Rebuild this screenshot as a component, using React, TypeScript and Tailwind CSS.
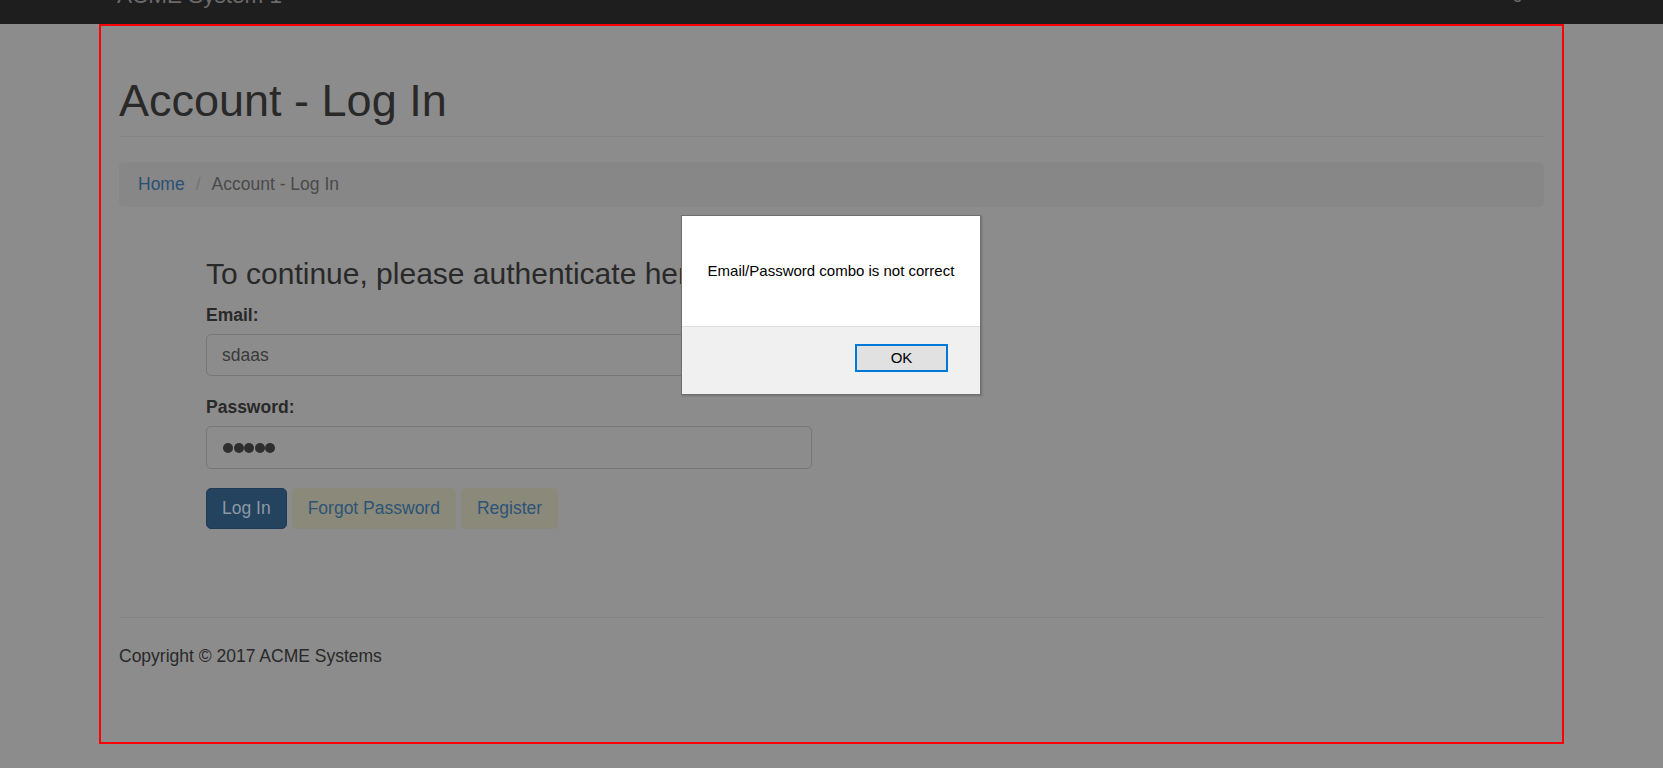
import React from "react";

export default function App() {
  return (
    <div className="relative min-h-[768px] w-[1663px] overflow-hidden bg-[#8c8c8c] font-['Liberation_Sans',Arial,sans-serif] text-[#292929]">
      {/* navbar (scrolled, only bottom visible) */}
      <div className="h-[24px] overflow-hidden bg-[#1e1e1e]">
        <div className="mx-auto flex w-[1465px] items-start justify-between pl-[18px] pr-[23px]">
          <span className="-mt-[16px] block text-[22.5px] leading-[24px] text-[#6b6b6b] whitespace-nowrap">
            ACME System 1
          </span>
          <span className="-mt-[17px] block text-[17.5px] leading-[18px] text-[#6b6b6b] whitespace-nowrap">
            Log in
          </span>
        </div>
      </div>

      {/* container outline */}
      <div className="mx-auto h-[720px] w-[1465px] border-2 border-[#ff0000] px-[18px]">
        <div className="mt-[49.5px] border-b border-[#848484] pb-[11px]">
          <h1 className="text-[45px] font-normal leading-[49.5px]">Account - Log In</h1>
        </div>

        <div className="mt-[25px] flex h-[45px] items-center rounded-[5px] bg-[#878787] px-[19px] text-[17.5px] leading-[25px]">
          <span className="text-[#2a5074]">Home</span>
          <span className="pl-[11px] pr-[11px] text-[#737373]">/</span>
          <span className="text-[#4a4a4a]">Account - Log In</span>
        </div>

        <div className="pl-[87px]">
          <h3 className="mt-[50px] mb-[12.5px] text-[30px] font-normal leading-[33px] whitespace-nowrap">
            To continue, please authenticate here:
          </h3>

          <div className="mb-[18.75px]">
            <label className="mb-[6.25px] block text-[17.5px] font-bold leading-[25px]">Email:</label>
            <div className="flex h-[42.5px] w-[606px] items-center rounded-[5px] border border-[#767676] px-[15px] text-[17.5px] text-[#3a3a3a]">
              sdaas
            </div>
          </div>

          <div className="mb-[18.75px]">
            <label className="mb-[6.25px] block text-[17.5px] font-bold leading-[25px]">Password:</label>
            <div className="flex h-[42.5px] w-[606px] items-center gap-[0.5px] rounded-[5px] border border-[#767676] px-[16px]">
              <div className="h-[10px] w-[10px] rounded-full bg-[#2e2e2e]" />
              <div className="h-[10px] w-[10px] rounded-full bg-[#2e2e2e]" />
              <div className="h-[10px] w-[10px] rounded-full bg-[#2e2e2e]" />
              <div className="h-[10px] w-[10px] rounded-full bg-[#2e2e2e]" />
              <div className="h-[10px] w-[10px] rounded-full bg-[#2e2e2e]" />
            </div>
          </div>

          <div className="flex gap-[5px] text-[17.5px]">
            <div className="flex h-[41.5px] items-center rounded-[5px] border border-[#1f3a55] bg-[#23435f] px-[15px] text-[#8d99a5]">
              Log In
            </div>
            <div className="flex h-[41.5px] items-center rounded-[5px] border border-[#8b8979] bg-[#8b8979] px-[15px] text-[#2c5478]">
              Forgot Password
            </div>
            <div className="flex h-[41.5px] items-center rounded-[5px] border border-[#8b8979] bg-[#8b8979] px-[15px] text-[#2c5478]">
              Register
            </div>
          </div>
        </div>

        <div className="mt-[87.5px] border-t border-[#848484]">
          <p className="mt-[26px] text-[17.5px] leading-[25px]">Copyright © 2017 ACME Systems</p>
        </div>
      </div>

      {/* alert dialog */}
      <div className="absolute left-[681px] top-[215px] flex h-[180px] w-[300px] flex-col border border-[#6f6f6f] bg-[#f0f0f0] shadow-[1px_1px_2px_rgba(0,0,0,0.2)]">
        <div className="h-[111px] border-b border-[#dfdfdf] bg-white pt-[46px] text-center text-[15px] leading-[18px] text-black">
          Email/Password combo is not correct
        </div>
        <div className="flex justify-end pr-[32px] pt-[17px]">
          <div className="flex h-[28px] w-[93px] items-center justify-center border-2 border-[#0078d7] bg-[#e1e1e1] text-[15px] text-black">
            OK
          </div>
        </div>
      </div>
    </div>
  );
}
